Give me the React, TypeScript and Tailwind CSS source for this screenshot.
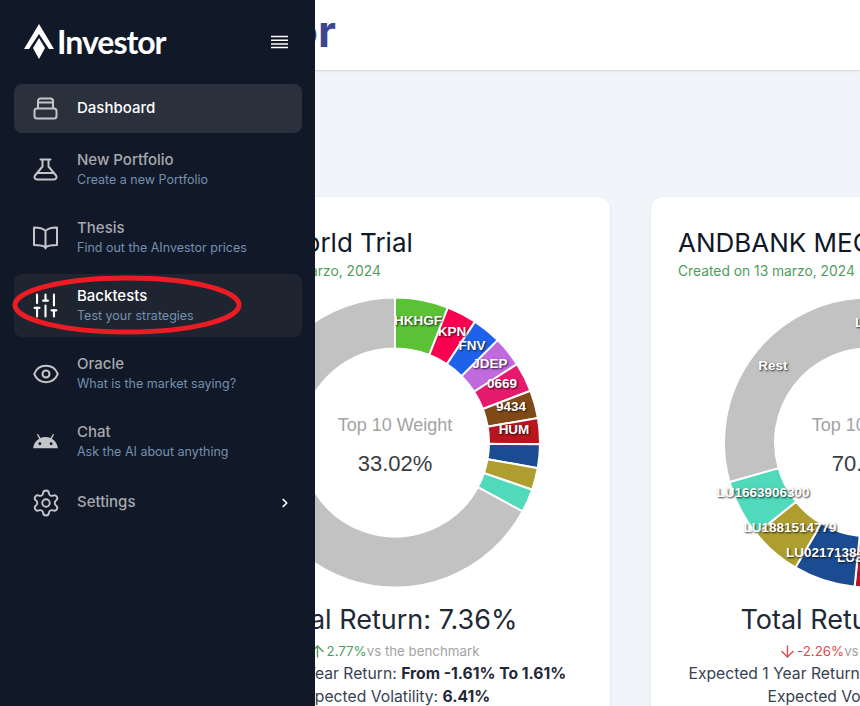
import { ArrowDown, ArrowUp, ChevronRight, Eye, Settings, SlidersVertical } from 'lucide-react';
import type { ReactNode } from 'react';

interface Segment {
  end: number;
  color: string;
}

interface ChartLabel {
  text: string;
  x: number;
  y: number;
  anchor?: 'start' | 'middle';
}

interface FundCardProps {
  title: string;
  created: string;
  weight: string;
  segments: Segment[];
  labels: ChartLabel[];
  totalReturn: string;
  delta: string;
  positive: boolean;
  range: string;
  volatility: string;
}

const CX = 218;
const CY = 157.5;
const OUTER = 145;
const INNER = 94;

const polar = (radius: number, angle: number) => {
  const rad = (angle * Math.PI) / 180;
  return [CX + radius * Math.sin(rad), CY - radius * Math.cos(rad)].map((v) => v.toFixed(2)).join(' ');
};

const arcPath = (start: number, end: number) => {
  const large = end - start > 180 ? 1 : 0;
  return `M${polar(OUTER, start)} A${OUTER} ${OUTER} 0 ${large} 1 ${polar(OUTER, end)} L${polar(INNER, end)} A${INNER} ${INNER} 0 ${large} 0 ${polar(INNER, start)} Z`;
};

const trialSegments: Segment[] = [
  { end: 21.4, color: '#5bc236' },
  { end: 33.5, color: '#fa0050' },
  { end: 45.1, color: '#1f62ea' },
  { end: 57.3, color: '#c06ade' },
  { end: 69.1, color: '#e51a6c' },
  { end: 80.3, color: '#7f4a17' },
  { end: 90.7, color: '#b9151f' },
  { end: 100.2, color: '#1b4b91' },
  { end: 109, color: '#ad9e2f' },
  { end: 118.4, color: '#50d9bb' },
  { end: 359.99, color: '#c2c2c2' },
];

const megaSegments: Segment[] = [
  { end: 30, color: '#5bc236' },
  { end: 60, color: '#fa0050' },
  { end: 90, color: '#1f62ea' },
  { end: 115, color: '#c06ade' },
  { end: 140, color: '#e51a6c' },
  { end: 165, color: '#7f4a17' },
  { end: 185.7, color: '#b9151f' },
  { end: 210.5, color: '#1b4b91' },
  { end: 231, color: '#ad9e2f' },
  { end: 254.2, color: '#50d9bb' },
  { end: 359.99, color: '#c2c2c2' },
];

const Donut = ({ segments, labels, weight }: { segments: Segment[]; labels: ChartLabel[]; weight: string }) => (
  <svg width="433" height="315" className="block shrink-0 font-['Liberation_Sans',sans-serif]">
    {segments.map((seg, i) => (
      <path key={seg.color} d={arcPath(i === 0 ? 0 : segments[i - 1].end, seg.end)} fill={seg.color} stroke="#fff" strokeWidth="2" />
    ))}
    <text x={CX} y={140} textAnchor="middle" dominantBaseline="central" fontSize="18" fill="#a3a3a3">Top 10 Weight</text>
    <text x={CX} y={178} textAnchor="middle" dominantBaseline="central" fontSize="22" fill="#373d3f">{weight}</text>
    {labels.map((label) => (
      <text
        key={label.text}
        x={label.x}
        y={label.y}
        textAnchor={label.anchor ?? 'middle'}
        dominantBaseline="central"
        fontSize="13.5"
        fontWeight="700"
        fill="#fff"
        className="[text-shadow:1px_1px_2px_rgba(0,0,0,0.8)]"
      >
        {label.text}
      </text>
    ))}
  </svg>
);

const FundCard = ({ title, created, weight, segments, labels, totalReturn, delta, positive, range, volatility }: FundCardProps) => (
  <section className="flex h-[600px] w-[433px] shrink-0 flex-col rounded-xl bg-white shadow-sm">
    <div className="px-[27px] pt-[27px]">
      <h2 className="whitespace-nowrap text-[26px] leading-[38px] text-[#111827]">{title}</h2>
      <p className="whitespace-nowrap text-[13.8px] leading-[18px] text-[#4f9d5c]">{created}</p>
    </div>
    <div className="mt-[5px]">
      <Donut segments={segments} labels={labels} weight={weight} />
    </div>
    <div className="flex flex-col items-center whitespace-nowrap text-center">
      <p className="text-[27px] leading-[40px] text-[#1f2937]">Total Return: {totalReturn}</p>
      <p className="flex items-center text-[13.3px] leading-[22px] text-[#a3a3a3]">
        {positive ? <ArrowUp size={19} strokeWidth={1.75} className="text-[#4f9d5c]" /> : <ArrowDown size={19} strokeWidth={1.75} className="text-[#e04848]" />}
        <span className={positive ? 'text-[#4f9d5c]' : 'text-[#e04848]'}>{delta}</span>vs the benchmark
      </p>
      <p className="text-[15.7px] leading-[23px] text-[#374151]">
        Expected 1 Year Return: <b className="text-[#1f2937]">{range}</b>
      </p>
      <p className="text-[15.7px] leading-[24px] text-[#374151]">
        Expected Volatility: <b className="text-[#1f2937]">{volatility}</b>
      </p>
    </div>
  </section>
);

const DashboardIcon = () => (
  <svg width="25" height="23" viewBox="0 0 25 23" fill="none" stroke="currentColor" strokeWidth="2" strokeLinejoin="round">
    <rect x="1.5" y="11.5" width="22" height="10" rx="2.5" />
    <path d="M5 11.5 V4 a2.5 2.5 0 0 1 2.5-2.5 h10 a2.5 2.5 0 0 1 2.5 2.5 V11.5 M5 5.5 H20" />
  </svg>
);

const FlaskIcon = () => (
  <svg width="25" height="23" viewBox="0 0 25 23" fill="none" stroke="currentColor" strokeWidth="2" strokeLinecap="round" strokeLinejoin="round">
    <path d="M7.5 1.5 H17.5 M9.5 1.5 V8.5 L2 17.5 C0.8 19.5 2 21.5 4 21.5 H21 C23 21.5 24.2 19.5 23 17.5 L15.5 8.5 V1.5 M5 15 H20" />
  </svg>
);

const BookIcon = () => (
  <svg width="27" height="24" viewBox="0 0 27 24" fill="none" stroke="currentColor" strokeWidth="2" strokeLinecap="round" strokeLinejoin="round">
    <path d="M13.5 5 C11.5 2.5 8 1.5 2 1.5 V19 C8 19 11.5 19.5 13.5 21.5 C15.5 19.5 19 19 25 19 V1.5 C19 1.5 15.5 2.5 13.5 5 V22.5" />
  </svg>
);

const AndroidIcon = () => (
  <svg width="27" height="27" viewBox="0 0 24 24" fill="currentColor">
    <path d="M17.6 9.48l1.84-3.18c.16-.31.04-.69-.26-.85-.29-.15-.65-.06-.83.22l-1.88 3.24c-2.86-1.21-6.08-1.21-8.94 0L5.65 5.67c-.19-.29-.58-.38-.87-.2-.28.18-.37.54-.22.83L6.4 9.48C3.3 11.25 1.28 14.44 1 18h22c-.28-3.56-2.3-6.75-5.4-8.52zM7 15.25c-.69 0-1.25-.56-1.25-1.25s.56-1.25 1.25-1.25 1.25.56 1.25 1.25-.56 1.25-1.25 1.25zm10 0c-.69 0-1.25-.56-1.25-1.25s.56-1.25 1.25-1.25 1.25.56 1.25 1.25-.56 1.25-1.25 1.25z" />
  </svg>
);

const NavItem = ({ icon, title, subtitle, className, titleClass, trailing }: { icon: ReactNode; title: string; subtitle?: string; className?: string; titleClass?: string; trailing?: ReactNode }) => (
  <div className={`flex items-center rounded-lg ${subtitle ? 'h-[63px]' : 'h-[49px]'} ${className ?? ''}`}>
    <div className="flex w-[63px] shrink-0 justify-center text-[#c4c6ca]">{icon}</div>
    <div className="min-w-0 flex-1 pb-[2px]">
      <p className={`text-[15px] font-medium leading-[22px] ${titleClass ?? 'text-[#a6a9af]'}`}>{title}</p>
      {subtitle && <p className="text-[12.5px] leading-[17px] text-[#7490b0]">{subtitle}</p>}
    </div>
    {trailing}
  </div>
);

const Sidebar = () => (
  <aside className="absolute inset-y-0 left-0 z-10 flex w-[315px] flex-col bg-[#111827] font-['Inter',sans-serif]">
    <div className="flex h-[84px] shrink-0 items-center pl-[23px] pr-[27px]">
      <svg width="32" height="38" viewBox="0 0 32 38" fill="#fff" className="shrink-0">
        <path d="M16 1 L31 26 H26 L16 11 L6 26 H1 Z" />
        <path d="M16 15 L22 25 L16 36 L10 25 Z" />
      </svg>
      <span className="ml-[2px] font-['Lato',sans-serif] text-[32px] font-bold leading-none tracking-[-1px] text-white">Investor</span>
      <svg width="17" height="14" viewBox="0 0 17 14" stroke="#fff" strokeWidth="1.5" className="ml-auto">
        <path d="M0 1.5 H17 M0 5.2 H17 M0 8.9 H17 M0 12.6 H17" />
      </svg>
    </div>
    <nav className="flex flex-col gap-[5px] pl-[14px] pr-[13px]">
      <NavItem icon={<DashboardIcon />} title="Dashboard" className="bg-[#2a303c]" titleClass="text-white" />
      <NavItem icon={<FlaskIcon />} title="New Portfolio" subtitle="Create a new Portfolio" />
      <NavItem icon={<BookIcon />} title="Thesis" subtitle="Find out the AInvestor prices" />
      <NavItem icon={<SlidersVertical size={29} strokeWidth={1.75} className="text-white" />} title="Backtests" subtitle="Test your strategies" className="bg-[#1e2430]" titleClass="text-white" />
      <NavItem icon={<Eye size={28} strokeWidth={1.75} />} title="Oracle" subtitle="What is the market saying?" />
      <NavItem icon={<AndroidIcon />} title="Chat" subtitle="Ask the AI about anything" />
      <NavItem
        icon={<Settings size={30} strokeWidth={1.5} />}
        title="Settings"
        trailing={<ChevronRight size={14} strokeWidth={3} className="mr-[10px] text-white" />}
      />
    </nav>
    <svg width="240" height="66" viewBox="0 0 240 66" fill="none" className="absolute left-[7px] top-[272px]">
      <ellipse cx="120" cy="33" rx="112" ry="27" stroke="#ed1c24" strokeWidth="5" />
    </svg>
  </aside>
);

export default function App() {
  return (
    <div className="relative h-[706px] w-[860px] overflow-hidden bg-[#f1f5f9] font-['Inter',sans-serif]">
      <Sidebar />
      <header className="flex h-[70px] items-center bg-white pb-[8px] pl-[160px] shadow-sm">
        <h1 className="text-[44px] font-bold text-[#3d4693]">Investor</h1>
      </header>
      <main className="flex gap-[41px] pl-[177px] pt-[127px]">
        <FundCard
          title="Mega World Trial"
          created="Created on 13 marzo, 2024"
          weight="33.02%"
          segments={trialSegments}
          labels={[
            { text: 'HKHGF', x: 241, y: 35 },
            { text: 'KPN', x: 275, y: 46 },
            { text: 'FNV', x: 295, y: 60 },
            { text: 'JDEP', x: 313, y: 78 },
            { text: '0669', x: 325, y: 98 },
            { text: '9434', x: 334, y: 121 },
            { text: 'HUM', x: 337, y: 144 },
          ]}
          totalReturn="7.36%"
          delta="2.77%"
          positive
          range="From -1.61% To 1.61%"
          volatility="6.41%"
        />
        <FundCard
          title="ANDBANK MEGATREND"
          created="Created on 13 marzo, 2024"
          weight="70.14%"
          segments={megaSegments}
          labels={[
            { text: 'LU0107852435', x: 204, y: 37, anchor: 'start' },
            { text: 'Rest', x: 122, y: 80 },
            { text: 'LU3128745260', x: 186, y: 272, anchor: 'start' },
            { text: 'LU1663906300', x: 112, y: 207 },
            { text: 'LU1881514779', x: 139, y: 242 },
            { text: 'LU0217138485', x: 135, y: 267, anchor: 'start' },
          ]}
          totalReturn="5.44%"
          delta="-2.26%"
          positive={false}
          range="From -2.61% To 12.61%"
          volatility="16.41%"
        />
      </main>
    </div>
  );
}
